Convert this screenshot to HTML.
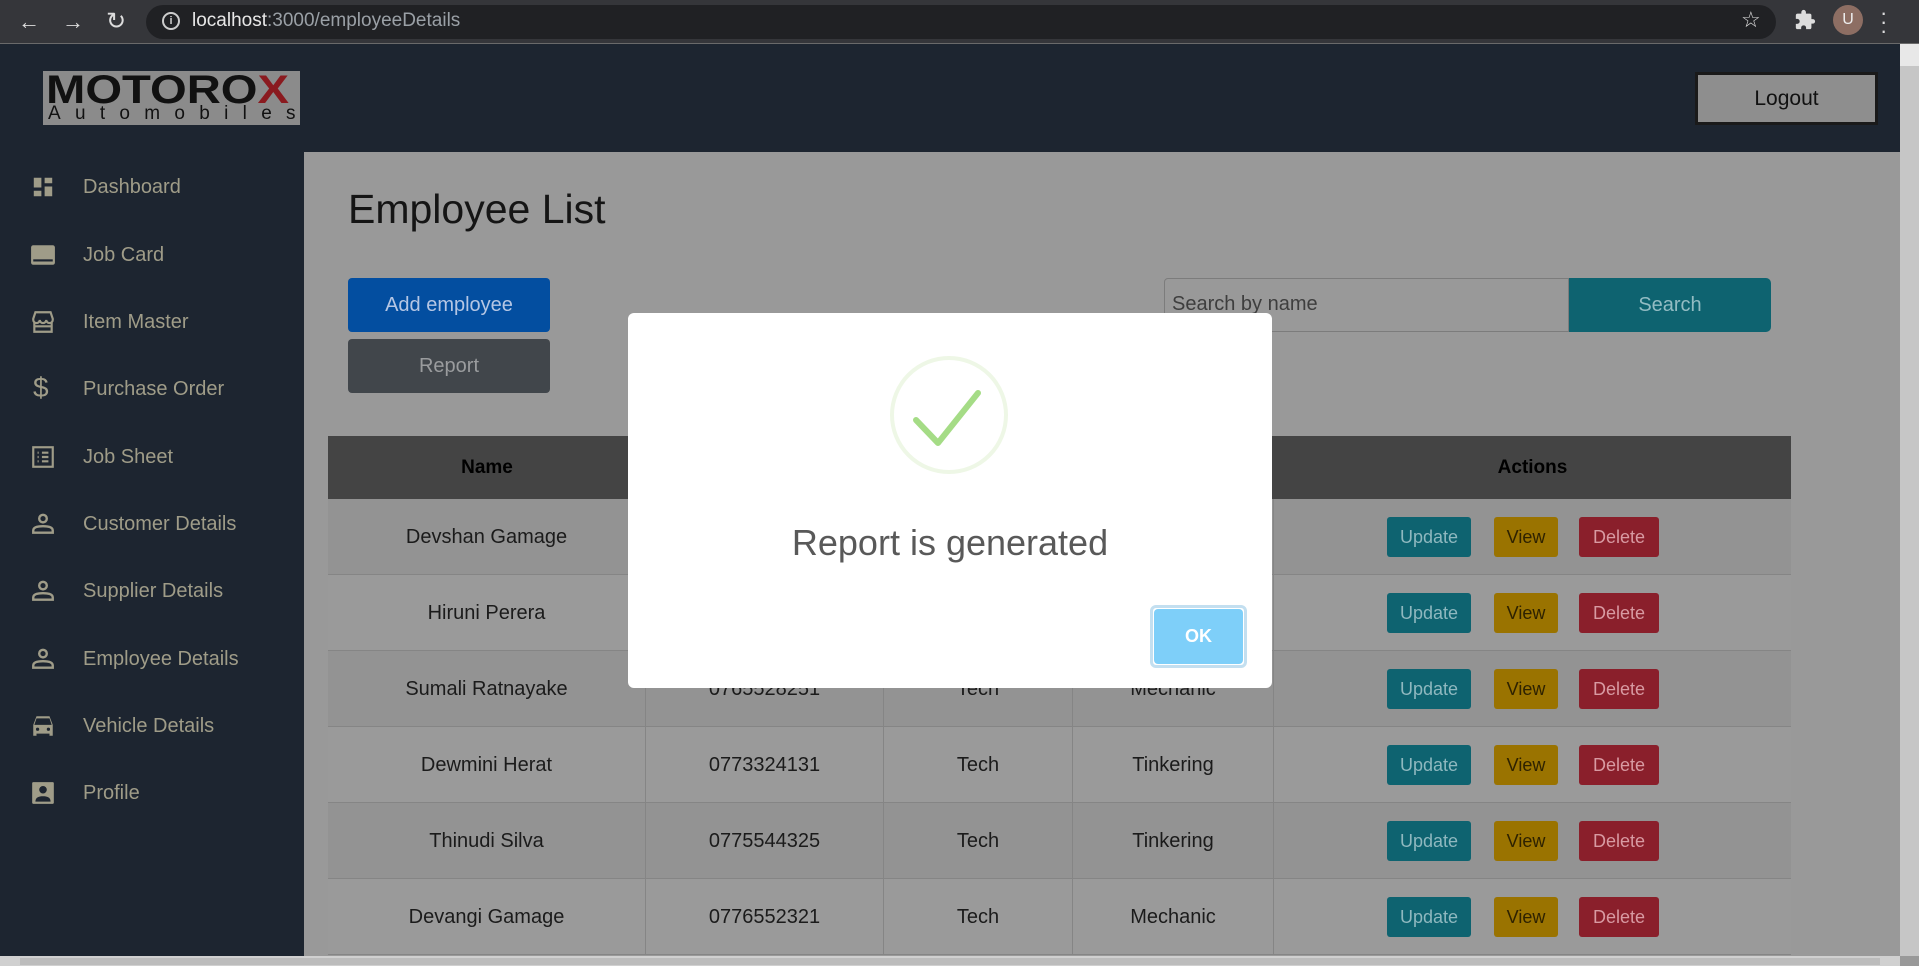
<!DOCTYPE html>
<html><head><meta charset="utf-8"><style>
*{box-sizing:border-box;margin:0;padding:0}
body{width:1919px;height:966px;overflow:hidden;position:relative;background:#999;font-family:"Liberation Sans",sans-serif}
.a{position:absolute}
.chrome{left:0;top:0;width:1919px;height:44px;background:#35363a}
.url{left:146px;top:5px;width:1630px;height:34px;border-radius:17px;background:#202124}
.hdr{left:0;top:44px;width:1900px;height:108px;background:#1d2530}
.side{left:0;top:152px;width:304px;height:814px;background:#1d2530}
.nav{left:83px;font-size:20px;color:#9f9c88;line-height:24px}
.ic{left:30px;width:26px;height:26px}
.btn{display:flex;align-items:center;justify-content:center;border-radius:4px;font-size:20px}
.th{top:436px;height:63px;background:#444;font-weight:bold;font-size:19px;color:#000;display:flex;align-items:center;justify-content:center}
.row{left:328px;width:1463px;height:76px;border-bottom:1px solid #858585}
.c{display:flex;align-items:center;justify-content:center;font-size:20px;color:#1b1b1b;height:76px;border-right:1px solid #858585}
.sb{height:40px;top:18px;font-size:18px;border-radius:3px}
</style></head><body>
<div class="a chrome"></div>
<div class="a" style="left:0;top:43px;width:1919px;height:1px;background:#6a6a6a"></div>
<div class="a" style="left:18px;top:9px;color:#ddd;font-size:22px">&#8592;</div>
<div class="a" style="left:62px;top:9px;color:#ddd;font-size:22px">&#8594;</div>
<div class="a" style="left:106px;top:7px;color:#ddd;font-size:24px">&#8635;</div>
<div class="a url"></div>
<div class="a" style="left:162px;top:12px;width:18px;height:18px;border:2px solid #ccc;border-radius:50%;color:#ccc;font-size:11px;text-align:center;line-height:14px;font-weight:bold">i</div>
<div class="a" style="left:192px;top:10px;font-size:19px;color:#e8e8e8">localhost<span style="color:#9aa0a6">:3000/employeeDetails</span></div>
<div class="a" style="left:1741px;top:7px;color:#ddd;font-size:22px">&#9734;</div>
<svg class="a" style="left:1794px;top:9px" width="22" height="22" viewBox="0 0 24 24"><path fill="#ddd" d="M20.5 11H19V7a2 2 0 0 0-2-2h-4V3.5a2.5 2.5 0 0 0-5 0V5H4a2 2 0 0 0-2 2v3.8h1.5a2.7 2.7 0 0 1 0 5.4H2V20a2 2 0 0 0 2 2h3.8v-1.5a2.7 2.7 0 0 1 5.4 0V22H17a2 2 0 0 0 2-2v-4h1.5a2.5 2.5 0 0 0 0-5z"/></svg>
<div class="a" style="left:1833px;top:5px;width:30px;height:30px;border-radius:50%;background:#8d6e63;color:#eee;font-size:16px;text-align:center;line-height:30px">U</div>
<div class="a" style="left:1880px;top:8px;color:#ddd;font-size:22px;line-height:9px">&middot;<br>&middot;<br>&middot;</div>

<div class="a hdr"></div>
<div class="a side"></div>
<div class="a" style="left:1900px;top:44px;width:19px;height:912px;background:#c6c6c6"></div>
<div class="a" style="left:1900px;top:44px;width:19px;height:22px;background:#e8e8e8"></div>
<div class="a" style="left:0;top:956px;width:1900px;height:10px;background:#d0d0d0"></div>
<div class="a" style="left:20px;top:958px;width:1860px;height:7px;background:#bcbcbc"></div>

<div class="a" style="left:43px;top:71px;width:257px;height:54px;background:#8b8b8b;overflow:hidden">
<div style="position:absolute;left:3px;top:-1px;font-size:40px;font-weight:900;color:#111;line-height:40px;transform:scaleX(1.18);transform-origin:left">MOTORO<span style="color:#8a1a1f">X</span></div>
<div style="position:absolute;left:5px;top:33px;font-size:19px;color:#111;letter-spacing:14.3px;line-height:20px">Automobiles</div>
</div>
<div class="a btn" style="left:1695px;top:72px;width:183px;height:53px;background:#8e8e8e;border:3px solid #1a1a1a;border-radius:0;color:#111;font-size:21px">Logout</div>

<svg class="a ic" style="top:174px" viewBox="0 0 24 24"><path fill="#9f9c88" d="M3 3h8v10H3zM13 3h8v6h-8zM13 11h8v10h-8zM3 15h8v6H3z" stroke="#1d2530" stroke-width="1"/></svg>
<div class="a nav" style="top:175px">Dashboard</div>
<svg class="a ic" style="top:242px" viewBox="0 0 24 24"><rect x="1" y="3" width="22" height="18" rx="2" fill="#9f9c88"/><rect x="3" y="16" width="18" height="2" fill="#1d2530"/></svg>
<div class="a nav" style="top:243px">Job Card</div>
<svg class="a ic" style="top:309px" viewBox="0 0 24 24" fill="none" stroke="#9f9c88" stroke-width="2"><path d="M3 9l2-6h14l2 6v1a3 3 0 0 1-6 0 3 3 0 0 1-6 0 3 3 0 0 1-6 0zM4 12v9h16v-9M4 16h16"/></svg>
<div class="a nav" style="top:310px">Item Master</div>
<div class="a" style="left:33px;top:372px;font-size:28px;color:#9f9c88">$</div>
<div class="a nav" style="top:377px">Purchase Order</div>
<svg class="a ic" style="top:444px" viewBox="0 0 24 24" fill="none" stroke="#9f9c88" stroke-width="2"><rect x="3" y="3" width="18" height="18"/><path d="M7 8h1M11 8h6M7 12h1M11 12h6M7 16h1M11 16h6"/></svg>
<div class="a nav" style="top:445px">Job Sheet</div>
<svg class="a ic" style="top:511px" viewBox="0 0 24 24" fill="none" stroke="#9f9c88" stroke-width="2.2"><circle cx="12" cy="7" r="3.5"/><path d="M3 20v-2c0-3 4-4 9-4s9 1 9 4v2z"/></svg>
<div class="a nav" style="top:512px">Customer Details</div>
<svg class="a ic" style="top:578px" viewBox="0 0 24 24" fill="none" stroke="#9f9c88" stroke-width="2.2"><circle cx="12" cy="7" r="3.5"/><path d="M3 20v-2c0-3 4-4 9-4s9 1 9 4v2z"/></svg>
<div class="a nav" style="top:579px">Supplier Details</div>
<svg class="a ic" style="top:646px" viewBox="0 0 24 24" fill="none" stroke="#9f9c88" stroke-width="2.2"><circle cx="12" cy="7" r="3.5"/><path d="M3 20v-2c0-3 4-4 9-4s9 1 9 4v2z"/></svg>
<div class="a nav" style="top:647px">Employee Details</div>
<svg class="a ic" style="top:713px" viewBox="0 0 24 24"><path fill="#9f9c88" d="M6 3h12l3 8v10h-3v-2H6v2H3V11zM6 5l-2 6h16l-2-6z"/><circle cx="7" cy="15" r="1.5" fill="#1d2530"/><circle cx="17" cy="15" r="1.5" fill="#1d2530"/></svg>
<div class="a nav" style="top:714px">Vehicle Details</div>
<svg class="a ic" style="top:780px" viewBox="0 0 24 24"><rect x="2" y="2" width="20" height="20" rx="1" fill="#9f9c88"/><circle cx="12" cy="9" r="3.5" fill="#1d2530"/><path d="M5 20c0-4 3-5 7-5s7 1 7 5z" fill="#1d2530"/></svg>
<div class="a nav" style="top:781px">Profile</div>

<div class="a" style="left:348px;top:186px;font-size:41px;color:#151515;font-weight:500">Employee List</div>
<div class="a btn" style="left:348px;top:278px;width:202px;height:54px;background:#034ea0;color:#b5c6e4">Add employee</div>
<div class="a btn" style="left:348px;top:339px;width:202px;height:54px;background:#41464b;color:#9a9c9e">Report</div>
<div class="a" style="left:1164px;top:278px;width:405px;height:54px;border:1px solid #7c7c7c;border-radius:4px 0 0 4px;font-size:20px;color:#3e3e3e;padding:14px 7px">Search by name</div>
<div class="a btn" style="left:1569px;top:278px;width:202px;height:54px;background:#0e6370;color:#93bcc3;border-radius:0 5px 5px 0">Search</div>

<div class="a th" style="left:328px;width:318px">Name</div>
<div class="a th" style="left:646px;width:238px">Contact</div>
<div class="a th" style="left:884px;width:189px">Dept</div>
<div class="a th" style="left:1073px;width:201px">Role</div>
<div class="a th" style="left:1274px;width:517px">Actions</div>

<div id="rows"></div>
<script>
var d=[["Devshan Gamage","0771234567","Tech","Mechanic"],["Hiruni Perera","0712345678","Tech","Tinkering"],["Sumali Ratnayake","0765528251","Tech","Mechanic"],["Dewmini Herat","0773324131","Tech","Tinkering"],["Thinudi Silva","0775544325","Tech","Tinkering"],["Devangi Gamage","0776552321","Tech","Mechanic"]];
var h="";d.forEach(function(r,i){var t=499+i*76;
h+='<div class="a row" style="top:'+t+'px;background:'+(i%2==0?'#939393':'#9a9a9a')+'"><div class="a c" style="left:0;width:318px">'+r[0]+'</div><div class="a c" style="left:318px;width:238px">'+r[1]+'</div><div class="a c" style="left:556px;width:189px">'+r[2]+'</div><div class="a c" style="left:745px;width:201px">'+r[3]+'</div>'+
'<div class="a btn sb" style="left:1059px;width:84px;background:#0e6370;color:#8fb8bf">Update</div><div class="a btn sb" style="left:1166px;width:64px;background:#9a7300;color:#2e2200">View</div><div class="a btn sb" style="left:1251px;width:80px;background:#8a1f2b;color:#d89aa2">Delete</div></div>';});
document.getElementById("rows").innerHTML=h;
</script>

<div class="a" style="left:628px;top:313px;width:644px;height:375px;background:#fff;border-radius:6px"></div>
<svg class="a" style="left:889px;top:355px" width="120" height="120" viewBox="0 0 120 120"><circle cx="60" cy="60" r="57" fill="none" stroke="#eef7e6" stroke-width="4"/><path d="M27 65l22 23 40-50" fill="none" stroke="#a5dc86" stroke-width="6" stroke-linecap="round" stroke-linejoin="round"/></svg>
<div class="a" style="left:628px;top:522px;width:644px;text-align:center;font-size:36px;color:#595959">Report is generated</div>
<div class="a" style="left:1150px;top:605px;width:97px;height:63px;border:3px solid #c3dff0;border-radius:6px"></div>
<div class="a btn" style="left:1154px;top:609px;width:89px;height:55px;background:#7ecff9;color:#fff;font-weight:bold;font-size:18px">OK</div>
</body></html>
